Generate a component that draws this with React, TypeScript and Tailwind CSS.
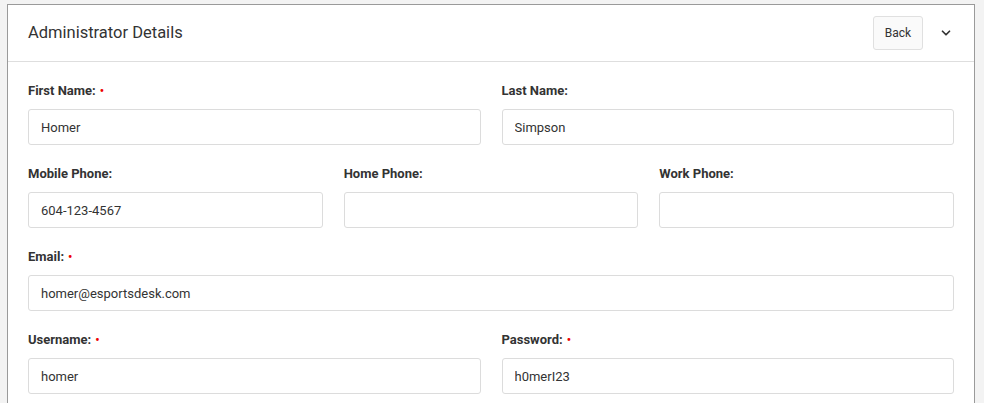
import { ChevronDown } from "lucide-react";

type Field = { label: string; value?: string; required?: boolean };

function FormField({ label, value = "", required }: Field) {
  return (
    <div className="flex min-w-0 flex-col">
      <label className="mb-[9px] flex h-[18px] items-center text-[13px] font-bold text-[#333]">
        {label}
        {required && <span className="ml-[4px] text-[12px] text-[#e00]">•</span>}
      </label>
      <input
        readOnly
        value={value}
        className="h-[36px] w-full rounded-[3px] border border-[#dcdcdc] bg-white px-[12px] text-[13px] text-[#333] outline-none"
      />
    </div>
  );
}

export default function App() {
  return (
    <div className="min-h-screen bg-[#f3f3f3] pl-[7px] pr-[9px] pt-[4px] font-['Roboto',sans-serif]">
      <div className="border border-b-0 border-[#9a9a9a] bg-white">
        <div className="flex h-[57px] items-center justify-between border-b border-[#dedede] pl-[20px] pr-[21px]">
          <h2 className="text-[16.5px] font-normal text-[#333]">Administrator Details</h2>
          <div className="flex items-center gap-[16px]">
            <button className="h-[34px] w-[50px] rounded-[3px] border border-[#e0e0e0] bg-[#fafafa] text-[12px] text-[#333]">
              Back
            </button>
            <ChevronDown className="h-[14px] w-[14px] text-[#333]" strokeWidth={3} />
          </div>
        </div>
        <div className="flex flex-col gap-[20px] px-[20px] pb-[20px] pt-[20px]">
          <div className="grid grid-cols-2 gap-x-[21px]">
            <FormField label="First Name:" value="Homer" required />
            <FormField label="Last Name:" value="Simpson" />
          </div>
          <div className="grid grid-cols-3 gap-x-[21px]">
            <FormField label="Mobile Phone:" value="604-123-4567" />
            <FormField label="Home Phone:" />
            <FormField label="Work Phone:" />
          </div>
          <FormField label="Email:" value="homer@esportsdesk.com" required />
          <div className="grid grid-cols-2 gap-x-[21px]">
            <FormField label="Username:" value="homer" required />
            <FormField label="Password:" value="h0merI23" required />
          </div>
        </div>
      </div>
    </div>
  );
}
